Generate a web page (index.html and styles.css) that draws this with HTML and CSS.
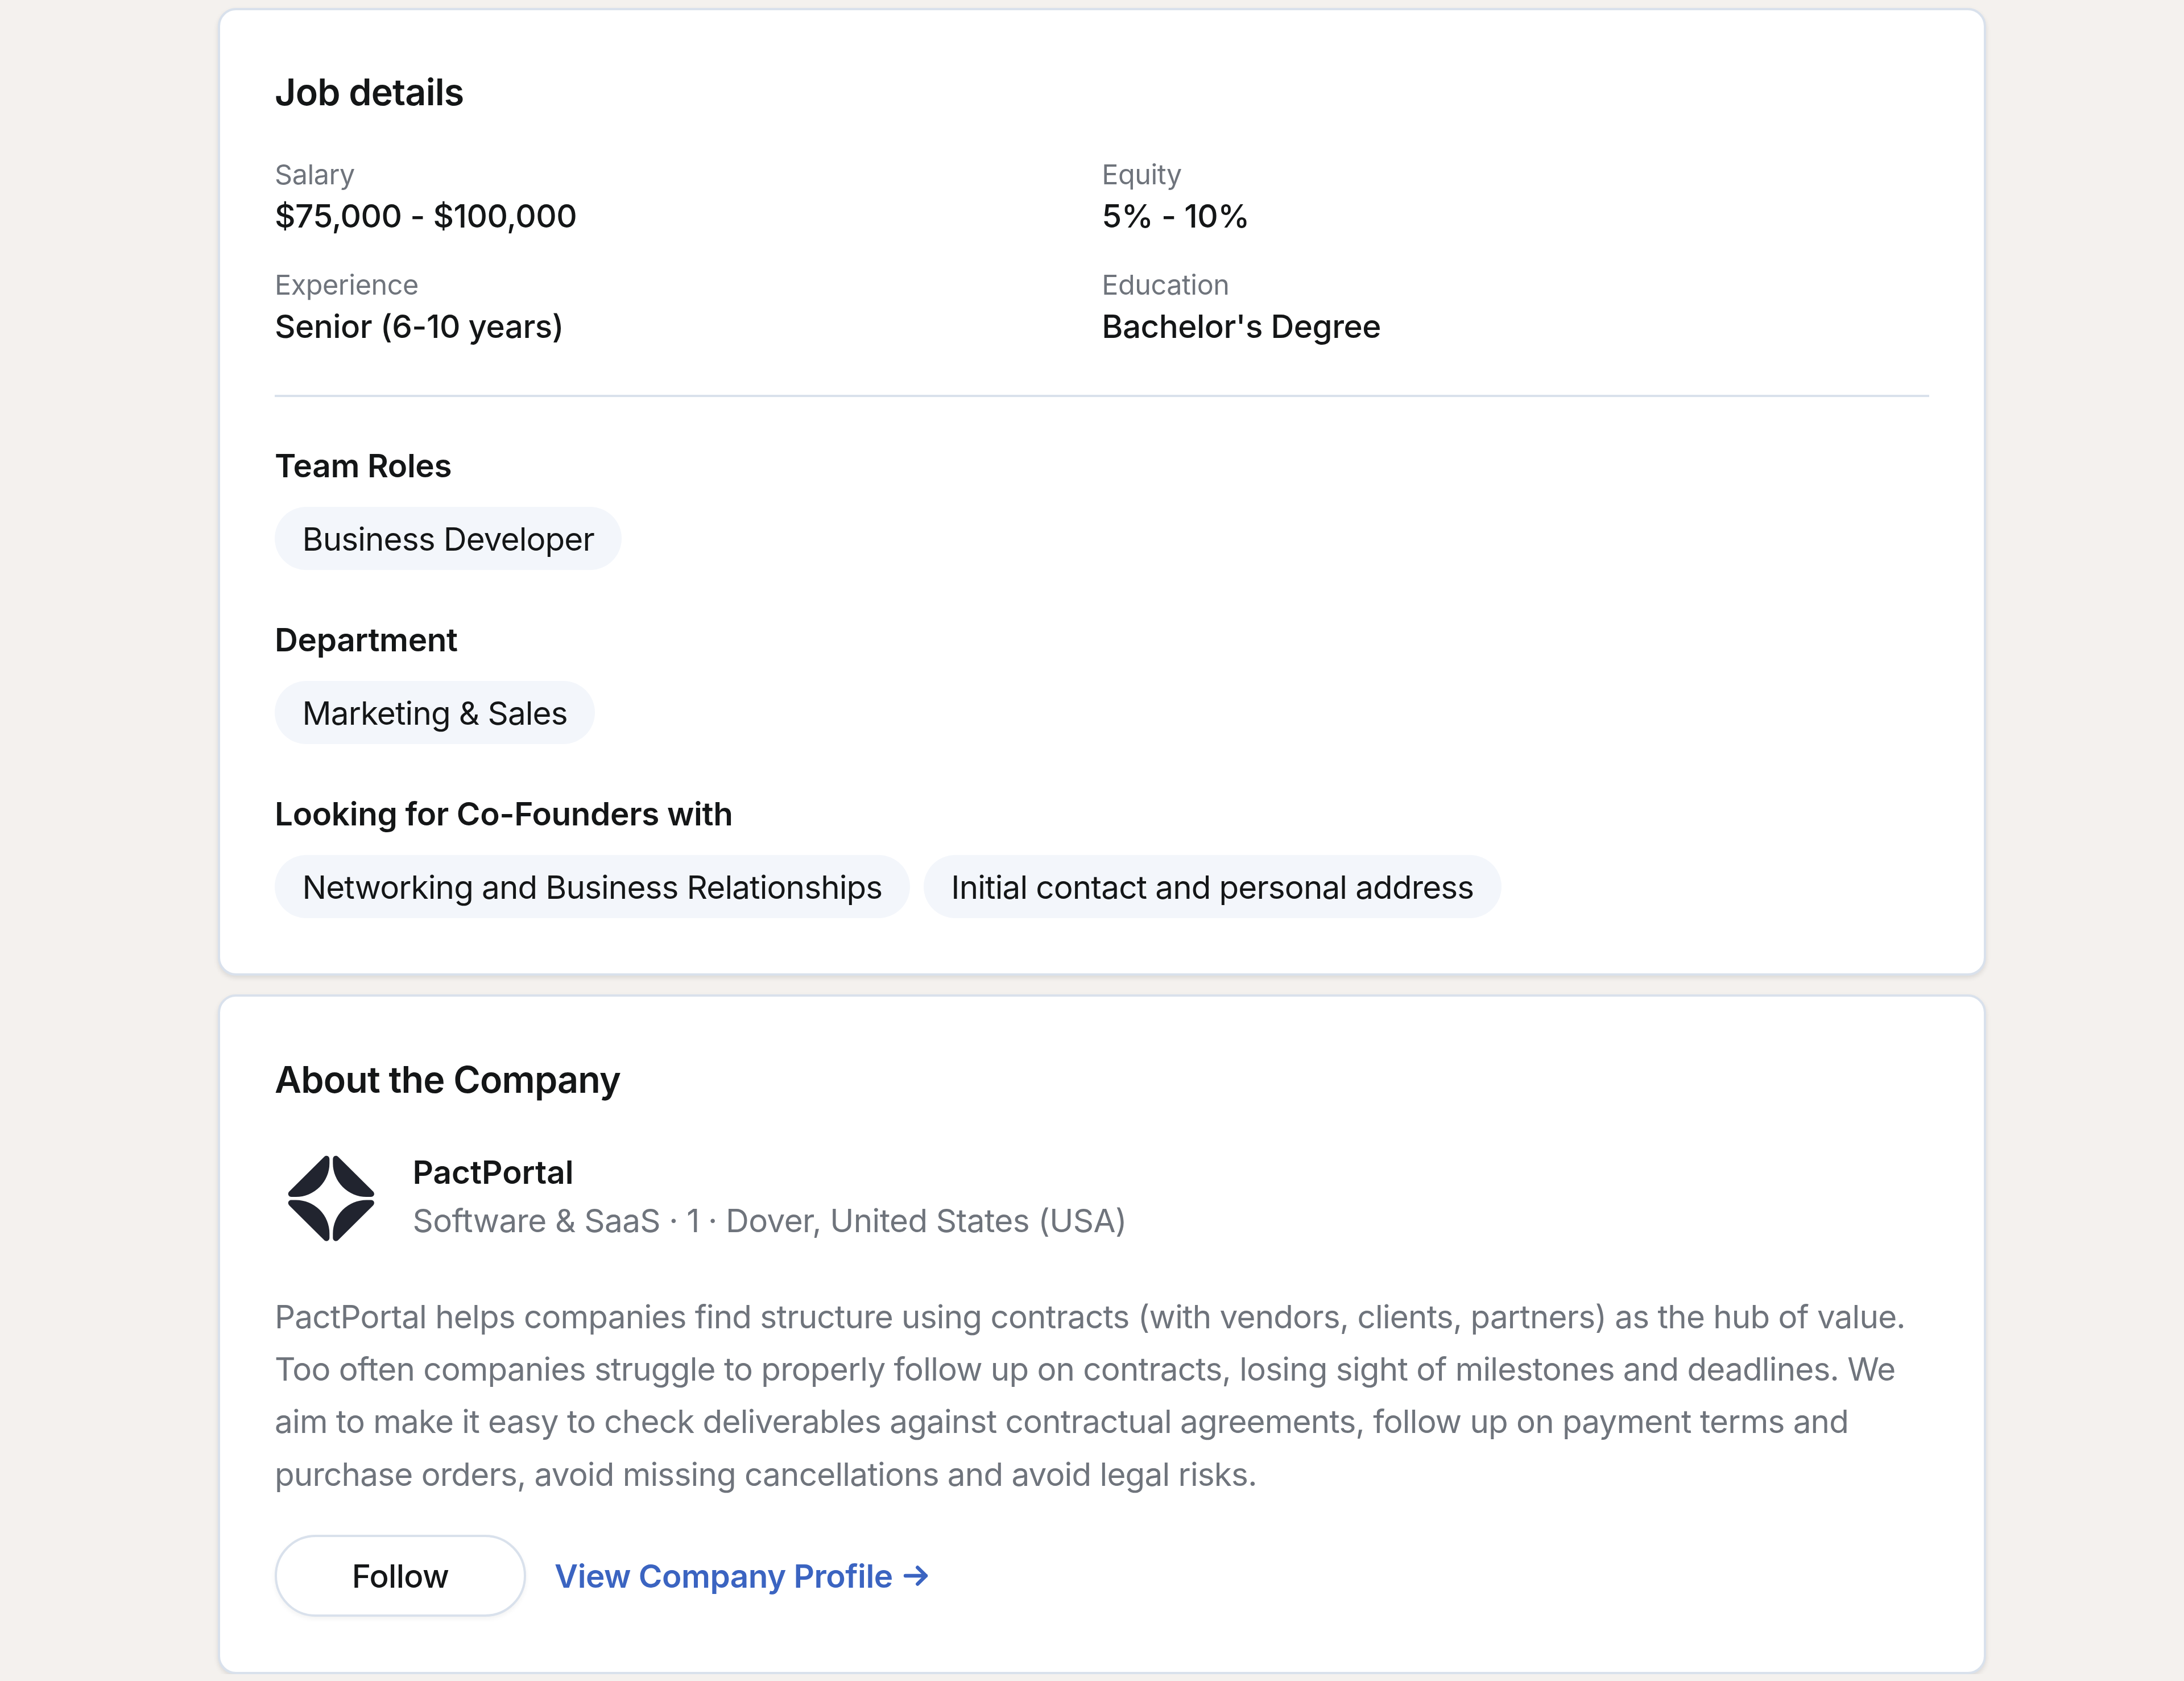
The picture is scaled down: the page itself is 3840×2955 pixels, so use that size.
FILE: index.html
```html
<!DOCTYPE html>
<html lang="en">
<head>
<meta charset="utf-8">
<title>Job details</title>
<link rel="stylesheet" href="styles.css">
</head>
<body>
<main class="page">
  <section class="card">
    <h2 class="card-title">Job details</h2>
    <dl class="facts">
      <div class="fact"><dt>Salary</dt><dd>$75,000 - $100,000</dd></div>
      <div class="fact"><dt>Equity</dt><dd>5% - 10%</dd></div>
      <div class="fact"><dt>Experience</dt><dd>Senior (6-10 years)</dd></div>
      <div class="fact"><dt>Education</dt><dd>Bachelor's Degree</dd></div>
    </dl>
    <hr class="divider">
    <div class="groups">
      <div class="group">
        <h3 class="group-title">Team Roles</h3>
        <div class="tags"><span class="tag">Business Developer</span></div>
      </div>
      <div class="group">
        <h3 class="group-title">Department</h3>
        <div class="tags"><span class="tag">Marketing &amp; Sales</span></div>
      </div>
      <div class="group">
        <h3 class="group-title">Looking for Co-Founders with</h3>
        <div class="tags"><span class="tag">Networking and Business Relationships</span><span class="tag">Initial contact and personal address</span></div>
      </div>
    </div>
  </section>
  <section class="card about-card">
    <h2 class="card-title">About the Company</h2>
    <div class="company">
      <svg class="logo" viewBox="-99.300 -96.700 194 194" aria-hidden="true">
        <defs>
          <path id="petal" d="M-12.500 -73C-8.500 -77 -3 -74.500 -3 -69L-3 -62A59 59 0 0 1 -62 -2.800L-70 -2.800C-75.500 -2.800 -77.500 -8.500 -73.500 -12.500Z"/>
        </defs>
        <use href="#petal"/>
        <use href="#petal" transform="scale(-1 1)"/>
        <use href="#petal" transform="scale(1 -1)"/>
        <use href="#petal" transform="scale(-1 -1)"/>
      </svg>
      <div class="company-info">
        <div class="company-name">PactPortal</div>
        <div class="company-meta">Software &amp; SaaS · 1 · Dover, United States (USA)</div>
      </div>
    </div>
    <p class="about">PactPortal helps companies find structure using contracts (with vendors, clients, partners) as the hub of value. Too often companies struggle to properly follow up on contracts, losing sight of milestones and deadlines. We aim to make it easy to check deliverables against contractual agreements, follow up on payment terms and purchase orders, avoid missing cancellations and avoid legal risks.</p>
    <div class="actions">
      <button class="follow" type="button">Follow</button>
      <a class="profile-link" href="#">View Company Profile
        <svg class="arrow" viewBox="0 0 44 40" aria-hidden="true"><path d="M4 20H40M25.300 5.500L40 20L25.300 34.500"/></svg>
      </a>
    </div>
  </section>
</main>
</body>
</html>
```
FILE: styles.css
```css
* { box-sizing: border-box; margin: 0; }
body { background: #f4f1ee; font-family: Inter, "Liberation Sans", sans-serif; font-size: 56.6px; line-height: 81px; color: #141617; }
.page { display: flex; flex-direction: column; gap: 32.5px; width: 3109px; margin: 13.5px 0 0 383px; }
.card { background: #fff; border: 4px solid #d9e1ec; border-radius: 32px; padding: 97px 96.5px 97px 96px; box-shadow: 0 4px 8px rgba(0, 0, 0, .1); }
.about-card { padding-top: 99px; }
.card-title { font-size: 64.6px; line-height: 94px; font-weight: 600; letter-spacing: -.8px; margin-bottom: 65.5px; }
.facts { display: grid; grid-template-columns: 1fr 1fr; row-gap: 48px; }
.fact dt { font-size: 48.5px; line-height: 65px; letter-spacing: -.45px; color: #6f747c; }
.fact dd { font-weight: 500; letter-spacing: -.5px; }
.divider { border: 0; height: 4px; background: #d9e1ec; margin: 79.5px 0 80.5px; }
.groups { display: flex; flex-direction: column; gap: 81.6px; }
.group-title { font-size: 56.6px; font-weight: 600; letter-spacing: -.35px; margin-bottom: 32.3px; }
.tags { display: flex; gap: 24px; }
.tag { background: #f3f6fb; border-radius: 56px; padding: 15.5px 48.5px 14.5px; letter-spacing: -.88px; }
.company { display: flex; gap: 48.5px; margin-bottom: 64.6px; }
.logo { width: 194px; height: 194px; fill: #21242f; }
.company-info { padding-top: 10px; display: flex; flex-direction: column; gap: 4px; }
.company-name { font-weight: 600; }
.company-meta, .about { color: #6f747c; }
.company-meta { letter-spacing: -.6px; }
.about { line-height: 92.3px; letter-spacing: -.8px; }
.actions { display: flex; align-items: center; gap: 50px; margin-top: 60px; }
.follow { font: inherit; font-weight: 500; letter-spacing: -.6px; color: inherit; width: 442px; height: 144.5px; background: #fff; border: 4px solid #d9e1ec; border-radius: 73px; box-shadow: 0 4px 8px rgba(0, 0, 0, .05); }
.profile-link { display: flex; align-items: center; gap: 18px; font-weight: 600; letter-spacing: -.5px; color: #3b64c1; text-decoration: none; }
.arrow { width: 44px; height: 40px; fill: none; stroke: currentColor; stroke-width: 6.4; stroke-linecap: round; stroke-linejoin: round; }
```
